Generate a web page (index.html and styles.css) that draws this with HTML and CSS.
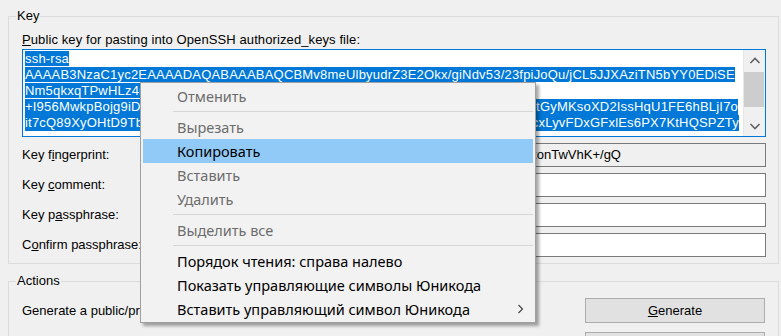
FILE: index.html
```html
<!DOCTYPE html>
<html lang="ru">
<head>
    <meta charset="UTF-8">
    <meta name="viewport" content="width=device-width, initial-scale=1.0">
    <title>PuTTY Key Generator</title>
    <link rel="stylesheet" href="styles.css">
</head>
<body>
    <fieldset class="group key-group">
        <legend>Key</legend>
        <div class="caption"><u>P</u>ublic key for pasting into OpenSSH authorized_keys file:</div>
        <div class="keybox">
            <div class="keytext">
                <div class="line"><span class="sel">ssh-rsa </span></div>
                <div class="line"><span class="sel">AAAAB3NzaC1yc2EAAAADAQABAAABAQCBMv8meUlbyudrZ3E2Okx/giNdv53/23fpiJoQu/jCL5JJXAziTN5bYY0EDiSE</span></div>
                <div class="line"><span class="sel">Nm5qkxqTPwHLz4nJ0e9vR2sWq8Yt+Lb5Hc1Zx</span></div>
                <div class="line"><span class="sel pin pin-4"><span class="fill">+I956MwkpBojg9iDkW3vQ7xTz1Rm5NcLp8HsYf2</span><span class="tail">3Vq8cD0tGyMKsoXD2IssHqU1FE6hBLjI7o</span></span></div>
                <div class="line"><span class="sel pin pin-5"><span class="fill">it7cQ89XyOHtD9TbZr4Kd0mWs6Ae2LqV5nJ8gPu</span><span class="tail">Wp4kGcxLyvFDxGFxlEs6PX7KtHQSPZTy</span></span></div>
            </div>
            <div class="scrollbar">
                <div class="sb-btn">
                    <svg width="12" height="8" viewBox="0 0 12 8"><polyline points="1.5,6 6,1.5 10.5,6" fill="none" stroke="#606060" stroke-width="1.6"/></svg>
                </div>
                <div class="sb-track"><div class="sb-thumb"></div></div>
                <div class="sb-btn">
                    <svg width="12" height="8" viewBox="0 0 12 8"><polyline points="1.5,2 6,6.5 10.5,2" fill="none" stroke="#606060" stroke-width="1.6"/></svg>
                </div>
            </div>
        </div>
        <div class="fields">
            <label>Key f<u>i</u>ngerprint:</label>
            <div class="field readonly"><span class="pin pin-fp"><span class="fill">ssh-rsa 2048 SHA256:Qw3pLx9eRt7HmZ2vK1uNcB8s</span><span class="tail">Fh7q2SxonTwVhK+/gQ</span></span></div>
            <label>Key <u>c</u>omment:</label>
            <div class="field"></div>
            <label>Key p<u>a</u>ssphrase:</label>
            <div class="field"></div>
            <label>C<u>o</u>nfirm passphrase:</label>
            <div class="field"></div>
        </div>
    </fieldset>

    <fieldset class="group actions-group">
        <legend>Actions</legend>
        <div class="action-row">
            <span>Generate a public/private key pair</span>
            <button><u>G</u>enerate</button>
        </div>
        <div class="action-row">
            <span>Load an existing private key file</span>
            <button><u>L</u>oad</button>
        </div>
    </fieldset>

    <div class="menu">
        <div class="item disabled">Отменить</div>
        <div class="sep"></div>
        <div class="item disabled">Вырезать</div>
        <div class="item active">Копировать</div>
        <div class="item disabled">Вставить</div>
        <div class="item disabled">Удалить</div>
        <div class="sep"></div>
        <div class="item disabled">Выделить все</div>
        <div class="sep"></div>
        <div class="item">Порядок чтения: справа налево</div>
        <div class="item">Показать управляющие символы Юникода</div>
        <div class="item sub">
            <span>Вставить управляющий символ Юникода</span>
            <svg width="7" height="10" viewBox="0 0 7 10"><polyline points="1.5,1 5.5,5 1.5,9" fill="none" stroke="#404040" stroke-width="1.1"/></svg>
        </div>
    </div>
</body>
</html>
```

FILE: styles.css
```css
body {
    margin: 0;
    background-color: #f0f0f0;
    font-family: 'Liberation Sans', Arial, sans-serif;
    font-size: 13px;
    line-height: 16px;
    color: #000;
    overflow: hidden;
}
.group {
    border: 1px solid #dcdcdc;
    margin: 8px 2px 0 8px;
    padding: 8px 12px 6px 13px;
    min-width: 0;
}
.group legend {
    padding: 0 1px;
    margin-left: -6px;
    line-height: 16px;
}
.actions-group {
    margin-top: 9px;
    padding: 9px 13px 0 13px;
}
.caption {
    height: 16px;
    letter-spacing: 0.1px;
}
.keybox {
    margin-top: 1px;
    height: 86px;
    border: 1px solid #0078d7;
    background: #fff;
    display: flex;
}
.keytext {
    flex: 1;
    padding: 1px 0 0 2px;
    overflow: hidden;
    white-space: nowrap;
    letter-spacing: 0.2px;
}
.line {
    height: 16px;
}
.sel {
    background: #0078d7;
    color: #fff;
}
.pin {
    display: inline-flex;
}
.pin .fill {
    flex: 1;
    min-width: 0;
    overflow: hidden;
}
.pin .tail {
    flex: none;
}
.pin-4 { width: 713px; }
.pin-5 { width: 714px; }
.pin-fp { width: 467px; }
.scrollbar {
    width: 21px;
    border-left: 1px solid #e6e6e6;
    background: #f0f0f0;
    display: flex;
    flex-direction: column;
}
.sb-btn {
    height: 21px;
    display: flex;
    align-items: center;
    justify-content: center;
}
.sb-track {
    flex: 1;
    padding: 1px 1px 0 0;
}
.sb-thumb {
    height: 35px;
    background: #cdcdcd;
}
.fields {
    margin-top: 6px;
    display: grid;
    grid-template-columns: 128px 1fr;
    grid-auto-rows: 24px;
    row-gap: 6px;
    align-items: center;
}
.field {
    height: 22px;
    border: 1px solid #7a7a7a;
    background: #fff;
    padding-left: 3px;
    display: flex;
    align-items: center;
    white-space: nowrap;
    overflow: hidden;
}
.field.readonly {
    background: #f0f0f0;
}
.action-row {
    display: flex;
    justify-content: space-between;
    align-items: center;
    margin-bottom: 9px;
}
button {
    width: 180px;
    height: 25px;
    background: #e1e1e1;
    border: 1px solid #adadad;
    font-family: 'Liberation Sans', Arial, sans-serif;
    font-size: 13px;
    color: #000;
    padding: 0;
}
.menu {
    position: absolute;
    left: 140px;
    top: 82px;
    width: 394px;
    padding: 1px 0;
    background: #f2f2f2;
    border: 1px solid #a0a0a0;
    box-shadow: 3px 3px 3px rgba(0,0,0,0.35);
    font-family: 'Noto Sans', 'Open Sans', sans-serif;
    font-size: 14.5px;
}
.item {
    height: 24px;
    line-height: 24px;
    margin: 0 2px;
    padding-left: 34px;
    white-space: nowrap;
}
.item.disabled {
    color: #6d6d6d;
}
.item.active {
    background: #91c9f7;
}
.item.sub {
    display: flex;
    align-items: center;
    justify-content: space-between;
    padding-right: 9px;
}
.sep {
    height: 1px;
    background: #d7d7d7;
    margin: 3px 2px 3px 32px;
}
```
